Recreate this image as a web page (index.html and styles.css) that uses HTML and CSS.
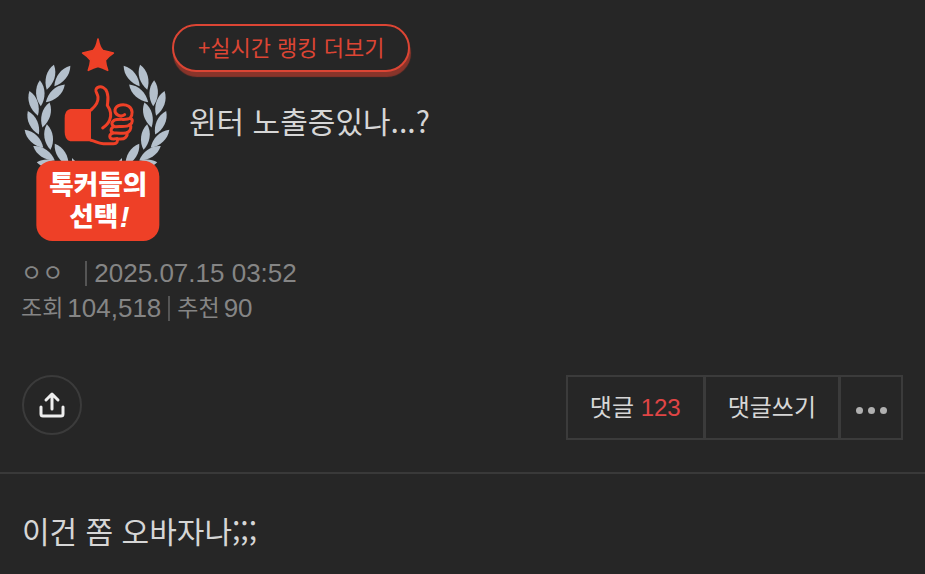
FILE: index.html
```html
<!DOCTYPE html>
<html lang="ko">
<head>
<meta charset="utf-8">
<meta name="viewport" content="width=device-width, initial-scale=1">
<title>윈터 노출증있나...?</title>
<link rel="stylesheet" href="styles.css">
</head>
<body>
<main>
  <header class="post-head">
    <svg class="badge" viewBox="0 0 495 660" role="img" aria-label="톡커들의 선택!">
      <defs>
        <path id="leaf" d="M0-39C18-16 16 16 0 39C-16 16-18-16 0-39Z"/>
        <g id="branch">
          <use href="#leaf" transform="translate(142 138) rotate(38)"/>
          <use href="#leaf" transform="translate(106 142) rotate(16)"/>
          <use href="#leaf" transform="translate(121 190) rotate(47)"/>
          <use href="#leaf" transform="translate(76 190) rotate(-2)"/>
          <use href="#leaf" transform="translate(56 220) rotate(-19)"/>
          <use href="#leaf" transform="translate(93 255) rotate(16)"/>
          <use href="#leaf" transform="translate(55 278) rotate(-25)"/>
          <use href="#leaf" transform="translate(101 321) rotate(-8)"/>
          <use href="#leaf" transform="translate(57 326) rotate(-46)"/>
          <use href="#leaf" transform="translate(87 370) rotate(-56)"/>
          <use href="#leaf" transform="translate(140 374) rotate(-32)"/>
          <use href="#leaf" transform="translate(104 402) rotate(-82)"/>
          <path d="M171 384l10 10h-10z"/>
        </g>
      </defs>
      <g class="laurel">
        <use href="#branch"/>
        <use href="#branch" transform="translate(492 0) scale(-1 1)"/>
      </g>
      <path class="red star" d="M249 27Q254 54 264 62Q280 66 295 69Q278 80 271 91Q272 105 278 121Q262 112 249 109Q236 112 220 121Q226 105 227 91Q220 80 203 69Q218 66 234 62Q244 54 249 27Z"/>
      <path class="red" d="M228 237H166Q149 240 149 265V305Q149 330 166 334H228Z"/>
      <g class="hand">
        <path d="M228 240C243 227 251 216 249 201C247 187 236 181 247 173C259 166 272 174 276 187C282 203 278 216 277 226C286 239 291 253 284 270C280 281 273 287 263 294"/>
        <path d="M228 331C243 334 248 341 265 341H296C305 341 311 333 306 326"/>
        <path d="M329 254C316 264 298 253 300 239C304 224 327 220 341 229C354 237 354 255 345 265C335 272 310 264 296 272C286 279 292 291 303 290C319 288 334 293 345 284C354 278 354 267 345 265"/>
        <path d="M297 290C284 295 286 309 299 309C314 307 329 315 340 306C349 299 349 289 344 284"/>
        <path d="M294 309C281 313 281 327 295 327C308 324 322 332 331 323C336 318 337 312 335 309"/>
      </g>
      <rect class="red" x="64" y="392" width="369" height="241" rx="48"/>
      <text class="badge-text" x="250" y="492" text-anchor="middle">톡커들의</text>
      <text class="badge-text" x="236" y="587" text-anchor="middle">선택</text>
      <text class="badge-text bang" x="314" y="590">!</text>
    </svg>
    <div class="head-text">
      <a class="ranking" href="#">+실시간 랭킹 더보기</a>
      <h1>윈터 노출증있나...?</h1>
    </div>
  </header>

  <div class="meta">
    <p><span class="author">ㅇㅇ</span><span class="rule"></span><time datetime="2025-07-15T03:52">2025.07.15 03:52</time></p>
    <p><span class="label">조회</span><span class="count">104,518</span><span class="rule"></span><span class="label">추천</span><span class="count">90</span></p>
  </div>

  <div class="actions">
    <button class="share" type="button" aria-label="공유">
      <svg viewBox="0 0 28 28"><path d="M3 16V23Q3 25 5 25H23Q25 25 25 23V16M14 18V4M8 9L14 3L20 9"/></svg>
    </button>
    <div class="buttons">
      <button class="comments" type="button">댓글 <b>123</b></button>
      <button class="write" type="button">댓글쓰기</button>
      <button class="more" type="button" aria-label="더보기"><i></i><i></i><i></i></button>
    </div>
  </div>

  <article>이건 쫌 오바자나;;;</article>
</main>
</body>
</html>
```
FILE: styles.css
```css
* {
  box-sizing: border-box;
}

body {
  margin: 0;
  background: #262626;
  color: #d6d6d6;
  font-family: "Noto Sans CJK KR", sans-serif;
}

h1,
p {
  margin: 0;
  font-weight: 400;
}

button {
  margin: 0;
  padding: 0;
  background: none;
  color: inherit;
  font: inherit;
}

.post-head {
  display: flex;
  padding: 24px 15px 0;
}

.badge {
  flex: none;
  width: 165px;
  height: 220px;
  margin-top: 6px;
}

.laurel {
  fill: #b4c0cc;
}

.red {
  fill: #ee4027;
}

.star {
  stroke: #ee4027;
  stroke-width: 5;
  stroke-linejoin: round;
}

.hand {
  fill: none;
  stroke: #ee4027;
  stroke-width: 9;
  stroke-linecap: round;
  stroke-linejoin: round;
}

.badge-text {
  fill: #fff;
  font-size: 80px;
  font-weight: 900;
}

.bang {
  font-family: "Liberation Sans", sans-serif;
  font-size: 88px;
  font-style: italic;
}

.head-text {
  display: flex;
  flex-direction: column;
  align-items: flex-start;
  gap: 24px;
  margin-left: -8px;
}

.ranking {
  padding: 0 24px 4px;
  border: 2px solid #dc4534;
  border-radius: 24px;
  box-shadow: 1px 5px 1px #89342a;
  background: #262626;
  color: #dc4534;
  font-size: 22px;
  line-height: 40px;
  text-decoration: none;
}

h1 {
  padding-left: 17px;
  font-size: 30px;
  line-height: 48px;
}

.meta {
  padding: 6px 21px 0;
  color: #858585;
  font-family: "Liberation Sans", "Noto Sans CJK KR", sans-serif;
  font-size: 26px;
}

.meta p {
  display: flex;
  align-items: center;
  height: 35px;
}

.author,
.label {
  padding-bottom: 5px;
  font-size: 23px;
}

.author {
  margin-right: 15px;
}

.count {
  margin-left: 4px;
}

.rule {
  width: 2px;
  height: 25px;
  margin: 0 7px;
  background: #555;
}

.actions {
  display: flex;
  align-items: flex-start;
  justify-content: space-between;
  padding: 49px 22px 32px 22px;
  border-bottom: 2px solid #393939;
}

.share {
  display: grid;
  place-items: center;
  width: 60px;
  height: 60px;
  border: 2px solid #3b3b3b;
  border-radius: 50%;
}

.share svg {
  width: 28px;
  height: 28px;
  fill: none;
  stroke: #eee;
  stroke-width: 3;
  stroke-linecap: round;
  stroke-linejoin: round;
}

.buttons {
  display: flex;
  height: 65px;
}

.buttons button {
  border: 2px solid #3b3b3b;
  font-family: "Liberation Sans", "Noto Sans CJK KR", sans-serif;
  font-size: 24px;
}

.buttons .comments,
.buttons .write {
  padding: 0 22px 5px;
  border-right-width: 1px;
}

.comments b {
  color: #e04545;
  font-weight: 400;
}

.buttons .more {
  display: flex;
  align-items: center;
  justify-content: center;
  gap: 5px;
  width: 64px;
  padding-top: 6px;
}

.more i {
  width: 7px;
  height: 7px;
  border-radius: 50%;
  background: #b0b0b0;
}

article {
  padding: 33px 22px 35px;
  font-size: 30px;
  line-height: 46px;
}
```
